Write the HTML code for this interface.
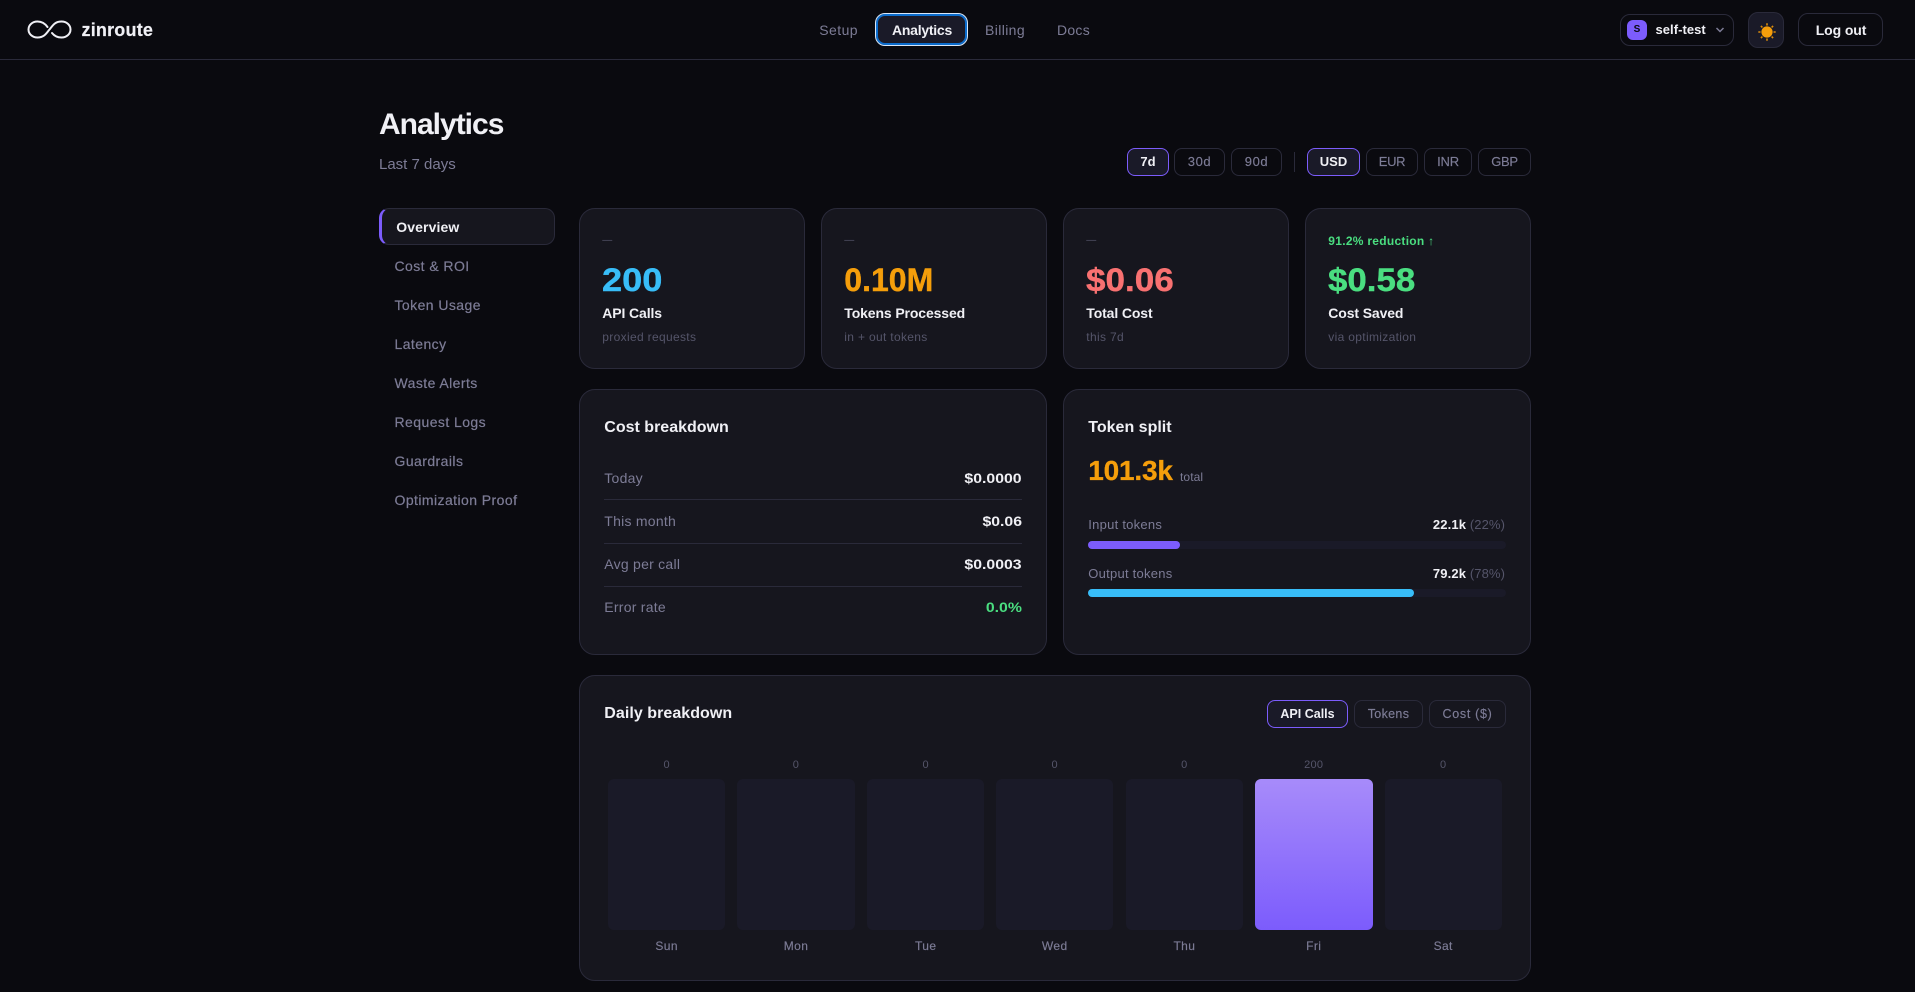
<!DOCTYPE html>
<html><head><meta charset="utf-8"><title>Analytics</title>
<style>
*{box-sizing:border-box;margin:0;padding:0}
html,body{width:1915px;height:992px;overflow:hidden;background:#0a0a0f;font-family:"Liberation Sans",sans-serif}
.a{position:absolute}
.t{position:absolute;white-space:nowrap;line-height:20px;height:20px;font-size:14px;color:#7d7c96}
.b{font-weight:700;color:#f0f0f5}
.m{-webkit-text-stroke:.2px currentColor}
.card{position:absolute;background:#16161e;border:1px solid #2a2a3a;border-radius:16px}
.btn{position:absolute;top:148px;height:28px;border:1px solid #2a2a3a;border-radius:8px;font-size:13px;line-height:26px;text-align:center;color:#7d7c96;-webkit-text-stroke:.15px currentColor}
.tb{position:absolute;top:700px;height:28px;border:1px solid #2a2a3a;border-radius:8px;font-size:12.5px;line-height:26px;text-align:center;color:#7d7c96;-webkit-text-stroke:.15px currentColor}
.on{border-color:#7c5cfc;background:#1a1a28;color:#f0f0f5;font-weight:700;-webkit-text-stroke:0}
.side{left:394.5px;letter-spacing:.43px}
.big{font-size:32px;font-weight:700;line-height:40px;height:40px;top:260px;transform-origin:left center;-webkit-text-stroke:.4px currentColor}
.lab{top:303px;font-weight:700;color:#f0f0f5;letter-spacing:-.12px}
.sub{top:327px;font-size:12px;color:#55556a;letter-spacing:.33px}
.dash{top:231px;font-size:10px;color:#55556a}
.h{font-size:16px;font-weight:700;color:#f0f0f5}
.rl{left:604.3px;letter-spacing:.25px;color:#7d7c96}
.rv{right:893px;font-weight:700;color:#f0f0f5;transform:scaleX(1.13);transform-origin:right center}
.div{position:absolute;left:604px;width:418px;height:1px;background:#2a2a3a}
.track{position:absolute;left:1088px;width:418px;height:8px;border-radius:4px;background:#1a1a28}
.track i{display:block;height:8px;border-radius:4px}
.bar{position:absolute;top:779px;width:117.4px;height:151px;border-radius:6px;background:#1a1a28}
.n{top:755px;width:117.4px;text-align:center;font-size:11px;color:#55556a;letter-spacing:.3px}
.d{top:936px;width:117.4px;text-align:center;font-size:12px;letter-spacing:.4px;-webkit-text-stroke:.15px currentColor}
</style></head>
<body>
<!-- header -->
<div class="a" style="left:0;top:59px;width:1915px;height:1px;background:#2a2a3a"></div>
<svg class="a" style="left:27px;top:20px" width="46" height="19" viewBox="0 0 46 19" fill="none" stroke="#f0f0f5" stroke-width="2" stroke-linecap="round"><path d="M25 13C27 15.500 30.500 17.500 34.500 17.500c5.200 0 9-3.600 9-8S39.700 1.500 34.500 1.500C27.500 1.500 25.500 6 22.500 9.500 19.500 13 17.500 17.500 10.500 17.500 5.300 17.500 1.500 13.900 1.500 9.500S5.300 1.500 10.500 1.500c4 0 7.500 2 10 5.500"/></svg>
<div class="t b m" style="left:81.5px;top:19.5px;font-size:18px;letter-spacing:.2px">zinroute</div>

<div class="t" style="left:819.3px;top:20px;letter-spacing:.42px">Setup</div>
<div class="a" style="left:875px;top:13px;width:93px;height:33px;border:1px solid #d7e6f8;border-radius:10px;background:#1a1a28;box-shadow:inset 0 0 0 2px #0b6ccc"></div>
<div class="t b" style="left:892px;top:20px;letter-spacing:-.25px">Analytics</div>
<div class="t" style="left:985px;top:20px;letter-spacing:.38px">Billing</div>
<div class="t" style="left:1057px;top:20px;letter-spacing:.27px">Docs</div>

<div class="a" style="left:1620px;top:14px;width:114px;height:32px;border:1px solid #2a2a3a;border-radius:10px"></div>
<div class="a" style="left:1627px;top:20px;width:20px;height:20px;border-radius:6px;background:#7c5cfc;color:#0a0a0f;font-size:10px;font-weight:700;line-height:20px;text-align:center">S</div>
<div class="t b" style="left:1655.5px;top:20px;font-size:13px;letter-spacing:.05px">self-test</div>
<svg class="a" style="left:1715px;top:26px" width="10" height="8" viewBox="0 0 10 8" fill="none" stroke="#7d7c96" stroke-width="1.5"><path d="M1.500 2 5 5.500 8.500 2"/></svg>
<div class="a" style="left:1748px;top:12px;width:36px;height:36px;border:1px solid #2a2a3a;border-radius:10px;background:#1a1a28"></div>
<svg class="a" style="left:1756px;top:20.5px" width="22" height="22" viewBox="0 0 22 22"><circle cx="11" cy="11" r="5.600" fill="#f59e0b"/><g stroke="#d98a0a" stroke-width="1.6"><path d="M11 2.300v2.200M11 17.500v2.200M2.300 11h2.200M17.500 11h2.200M4.900 4.900l1.500 1.500M15.600 15.600l1.500 1.500M4.900 17.100l1.500-1.500M15.600 6.400l1.500-1.500"/></g></svg>
<div class="a" style="left:1798px;top:13px;width:85px;height:33px;border:1px solid #2a2a3a;border-radius:10px"></div>
<div class="t b" style="left:1815.7px;top:20px;letter-spacing:-.1px">Log out</div>

<!-- title -->
<div class="t b" style="left:379px;top:105px;font-size:30px;line-height:40px;height:40px;letter-spacing:-1px">Analytics</div>
<div class="t" style="left:379px;top:155px;font-size:15px">Last 7 days</div>

<div class="btn on" style="left:1127px;width:42px">7d</div>
<div class="btn" style="left:1174px;width:51px;letter-spacing:.6px">30d</div>
<div class="btn" style="left:1231px;width:51px;letter-spacing:.6px">90d</div>
<div class="a" style="left:1294px;top:152px;width:1px;height:20px;background:#2a2a3a"></div>
<div class="btn on" style="left:1307px;width:53px">USD</div>
<div class="btn" style="left:1366px;width:52px;letter-spacing:-.3px">EUR</div>
<div class="btn" style="left:1424px;width:48px;letter-spacing:-.2px">INR</div>
<div class="btn" style="left:1478px;width:53px;letter-spacing:-.3px">GBP</div>

<!-- sidebar -->
<div class="a" style="left:379px;top:208px;width:176px;height:37px;background:#16161e;border:1px solid #2a2a3a;border-left:3px solid #7c5cfc;border-radius:10px"></div>
<div class="t b" style="left:396.3px;top:217px;letter-spacing:.1px">Overview</div>
<div class="t m side" style="top:256px">Cost &amp; ROI</div>
<div class="t m side" style="top:295px">Token Usage</div>
<div class="t m side" style="top:334px">Latency</div>
<div class="t m side" style="top:373px">Waste Alerts</div>
<div class="t m side" style="top:412px">Request Logs</div>
<div class="t m side" style="top:451px">Guardrails</div>
<div class="t m side" style="top:490px">Optimization Proof</div>

<!-- stat cards -->
<div class="card" style="left:579px;top:208px;width:226px;height:161px"></div>
<div class="card" style="left:821px;top:208px;width:226px;height:161px"></div>
<div class="card" style="left:1063px;top:208px;width:226px;height:161px"></div>
<div class="card" style="left:1305px;top:208px;width:226px;height:161px"></div>

<div class="t dash" style="left:602.3px">—</div>
<div class="t big" style="left:602.3px;color:#38bdf8;transform:scaleX(1.13)">200</div>
<div class="t lab" style="left:602.3px">API Calls</div>
<div class="t sub" style="left:602.3px">proxied requests</div>

<div class="t dash" style="left:844.3px">—</div>
<div class="t big" style="left:844.3px;color:#f59e0b">0.10M</div>
<div class="t lab" style="left:844.3px">Tokens Processed</div>
<div class="t sub" style="left:844.3px">in + out tokens</div>

<div class="t dash" style="left:1086.3px">—</div>
<div class="t big" style="left:1086.3px;color:#f87171;transform:scaleX(1.096)">$0.06</div>
<div class="t lab" style="left:1086.3px">Total Cost</div>
<div class="t sub" style="left:1086.3px">this 7d</div>

<div class="t" style="left:1328.3px;top:230.5px;font-size:12px;font-weight:700;color:#4ade80;letter-spacing:.28px">91.2% reduction ↑</div>
<div class="t big" style="left:1328.3px;color:#4ade80;transform:scaleX(1.09)">$0.58</div>
<div class="t lab" style="left:1328.3px">Cost Saved</div>
<div class="t sub" style="left:1328.3px">via optimization</div>

<!-- cost breakdown -->
<div class="card" style="left:579px;top:389px;width:468px;height:266px"></div>
<div class="t h" style="left:604.3px;top:418px">Cost breakdown</div>
<div class="t rl" style="top:468px">Today</div><div class="t rv" style="top:468px">$0.0000</div>
<div class="div" style="top:499px"></div>
<div class="t rl" style="top:511px">This month</div><div class="t rv" style="top:511px">$0.06</div>
<div class="div" style="top:543px"></div>
<div class="t rl" style="top:554px">Avg per call</div><div class="t rv" style="top:554px">$0.0003</div>
<div class="div" style="top:586px"></div>
<div class="t rl" style="top:597px">Error rate</div><div class="t rv" style="top:597px;color:#4ade80">0.0%</div>

<!-- token split -->
<div class="card" style="left:1063px;top:389px;width:468px;height:266px"></div>
<div class="t h" style="left:1088.3px;top:418px">Token split</div>
<div class="t" style="left:1088.3px;top:451px;font-size:28px;font-weight:700;line-height:40px;height:40px;color:#f59e0b;letter-spacing:-.2px;-webkit-text-stroke:.3px currentColor">101.3k</div>
<div class="t" style="left:1180px;top:467px;font-size:12px;letter-spacing:.1px">total</div>
<div class="t" style="left:1088.3px;top:515px;font-size:13px;letter-spacing:.25px">Input tokens</div>
<div class="t" style="right:410px;top:515px;font-size:13px;color:#55556a;letter-spacing:.1px"><b style="color:#f0f0f5;letter-spacing:.15px">22.1k</b> (22%)</div>
<div class="track" style="top:541px"><i style="width:92px;background:#7c5cfc"></i></div>
<div class="t" style="left:1088.3px;top:564px;font-size:13px;letter-spacing:.25px">Output tokens</div>
<div class="t" style="right:410px;top:564px;font-size:13px;color:#55556a;letter-spacing:.1px"><b style="color:#f0f0f5;letter-spacing:.15px">79.2k</b> (78%)</div>
<div class="track" style="top:589px"><i style="width:326px;background:#38bdf8"></i></div>

<!-- daily -->
<div class="card" style="left:579px;top:675px;width:952px;height:306px"></div>
<div class="t h" style="left:604.3px;top:704px;letter-spacing:.05px">Daily breakdown</div>
<div class="tb on" style="left:1267px;width:81px">API Calls</div>
<div class="tb" style="left:1354px;width:69px;letter-spacing:.33px">Tokens</div>
<div class="tb" style="left:1429px;width:77px;letter-spacing:.68px">Cost ($)</div>

<div class="bar" style="left:608px"></div>
<div class="bar" style="left:737.3px"></div>
<div class="bar" style="left:867px"></div>
<div class="bar" style="left:996px"></div>
<div class="bar" style="left:1125.7px"></div>
<div class="bar" style="left:1255px;width:118px;background:linear-gradient(180deg,#a78bfa,#7c5cfc)"></div>
<div class="bar" style="left:1384.5px"></div>

<div class="t n" style="left:608px">0</div><div class="t d" style="left:608px">Sun</div>
<div class="t n" style="left:737.3px">0</div><div class="t d" style="left:737.3px">Mon</div>
<div class="t n" style="left:867px">0</div><div class="t d" style="left:867px">Tue</div>
<div class="t n" style="left:996px">0</div><div class="t d" style="left:996px">Wed</div>
<div class="t n" style="left:1125.7px">0</div><div class="t d" style="left:1125.7px">Thu</div>
<div class="t n" style="left:1255px">200</div><div class="t d" style="left:1255px">Fri</div>
<div class="t n" style="left:1384.5px">0</div><div class="t d" style="left:1384.5px">Sat</div>
</body></html>
